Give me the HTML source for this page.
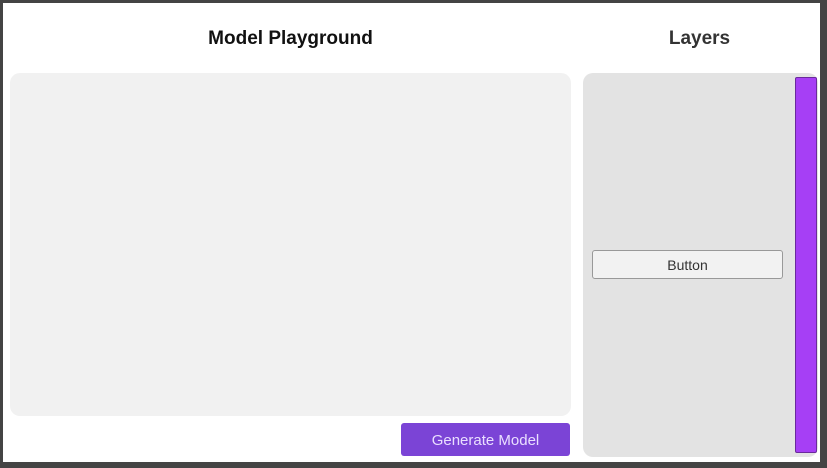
<!DOCTYPE html>
<html><head><style>
html,body{margin:0;padding:0}
body{width:827px;height:468px;background:#444;position:relative;overflow:hidden;font-family:"Liberation Sans",Arial,sans-serif}
.w{position:absolute;left:3px;top:3px;width:817px;height:459px;background:#fff}
.a{position:absolute}
</style></head><body>
<div class="w"></div>
<div class="a" style="left:10px;top:28px;width:561px;text-align:center;font-weight:bold;font-size:19px;color:#111">Model Playground</div>
<div class="a" style="left:583px;top:28px;width:233px;text-align:center;font-weight:bold;font-size:19px;color:#333">Layers</div>
<div class="a" style="left:10px;top:73px;width:561px;height:343px;background:#f1f1f1;border-radius:10px"></div>
<div class="a" style="left:401px;top:423px;width:169px;height:33px;background:#7b44d6;border-radius:3px;color:#eadfff;font-size:15px;line-height:35px;text-align:center">Generate Model</div>
<div class="a" style="left:583px;top:73px;width:235px;height:384px;background:#e3e3e3;border-radius:10px"></div>
<div class="a" style="left:795px;top:77px;width:20px;height:374px;background:#a63ff5;border:1px solid #6a2a9c;border-radius:2px"></div>
<div class="a" style="left:592px;top:250px;width:189px;height:27px;background:#f2f2f2;border:1px solid #999;border-radius:3px;font-size:14px;line-height:29px;text-align:center;color:#333">Button</div>
</body></html>
